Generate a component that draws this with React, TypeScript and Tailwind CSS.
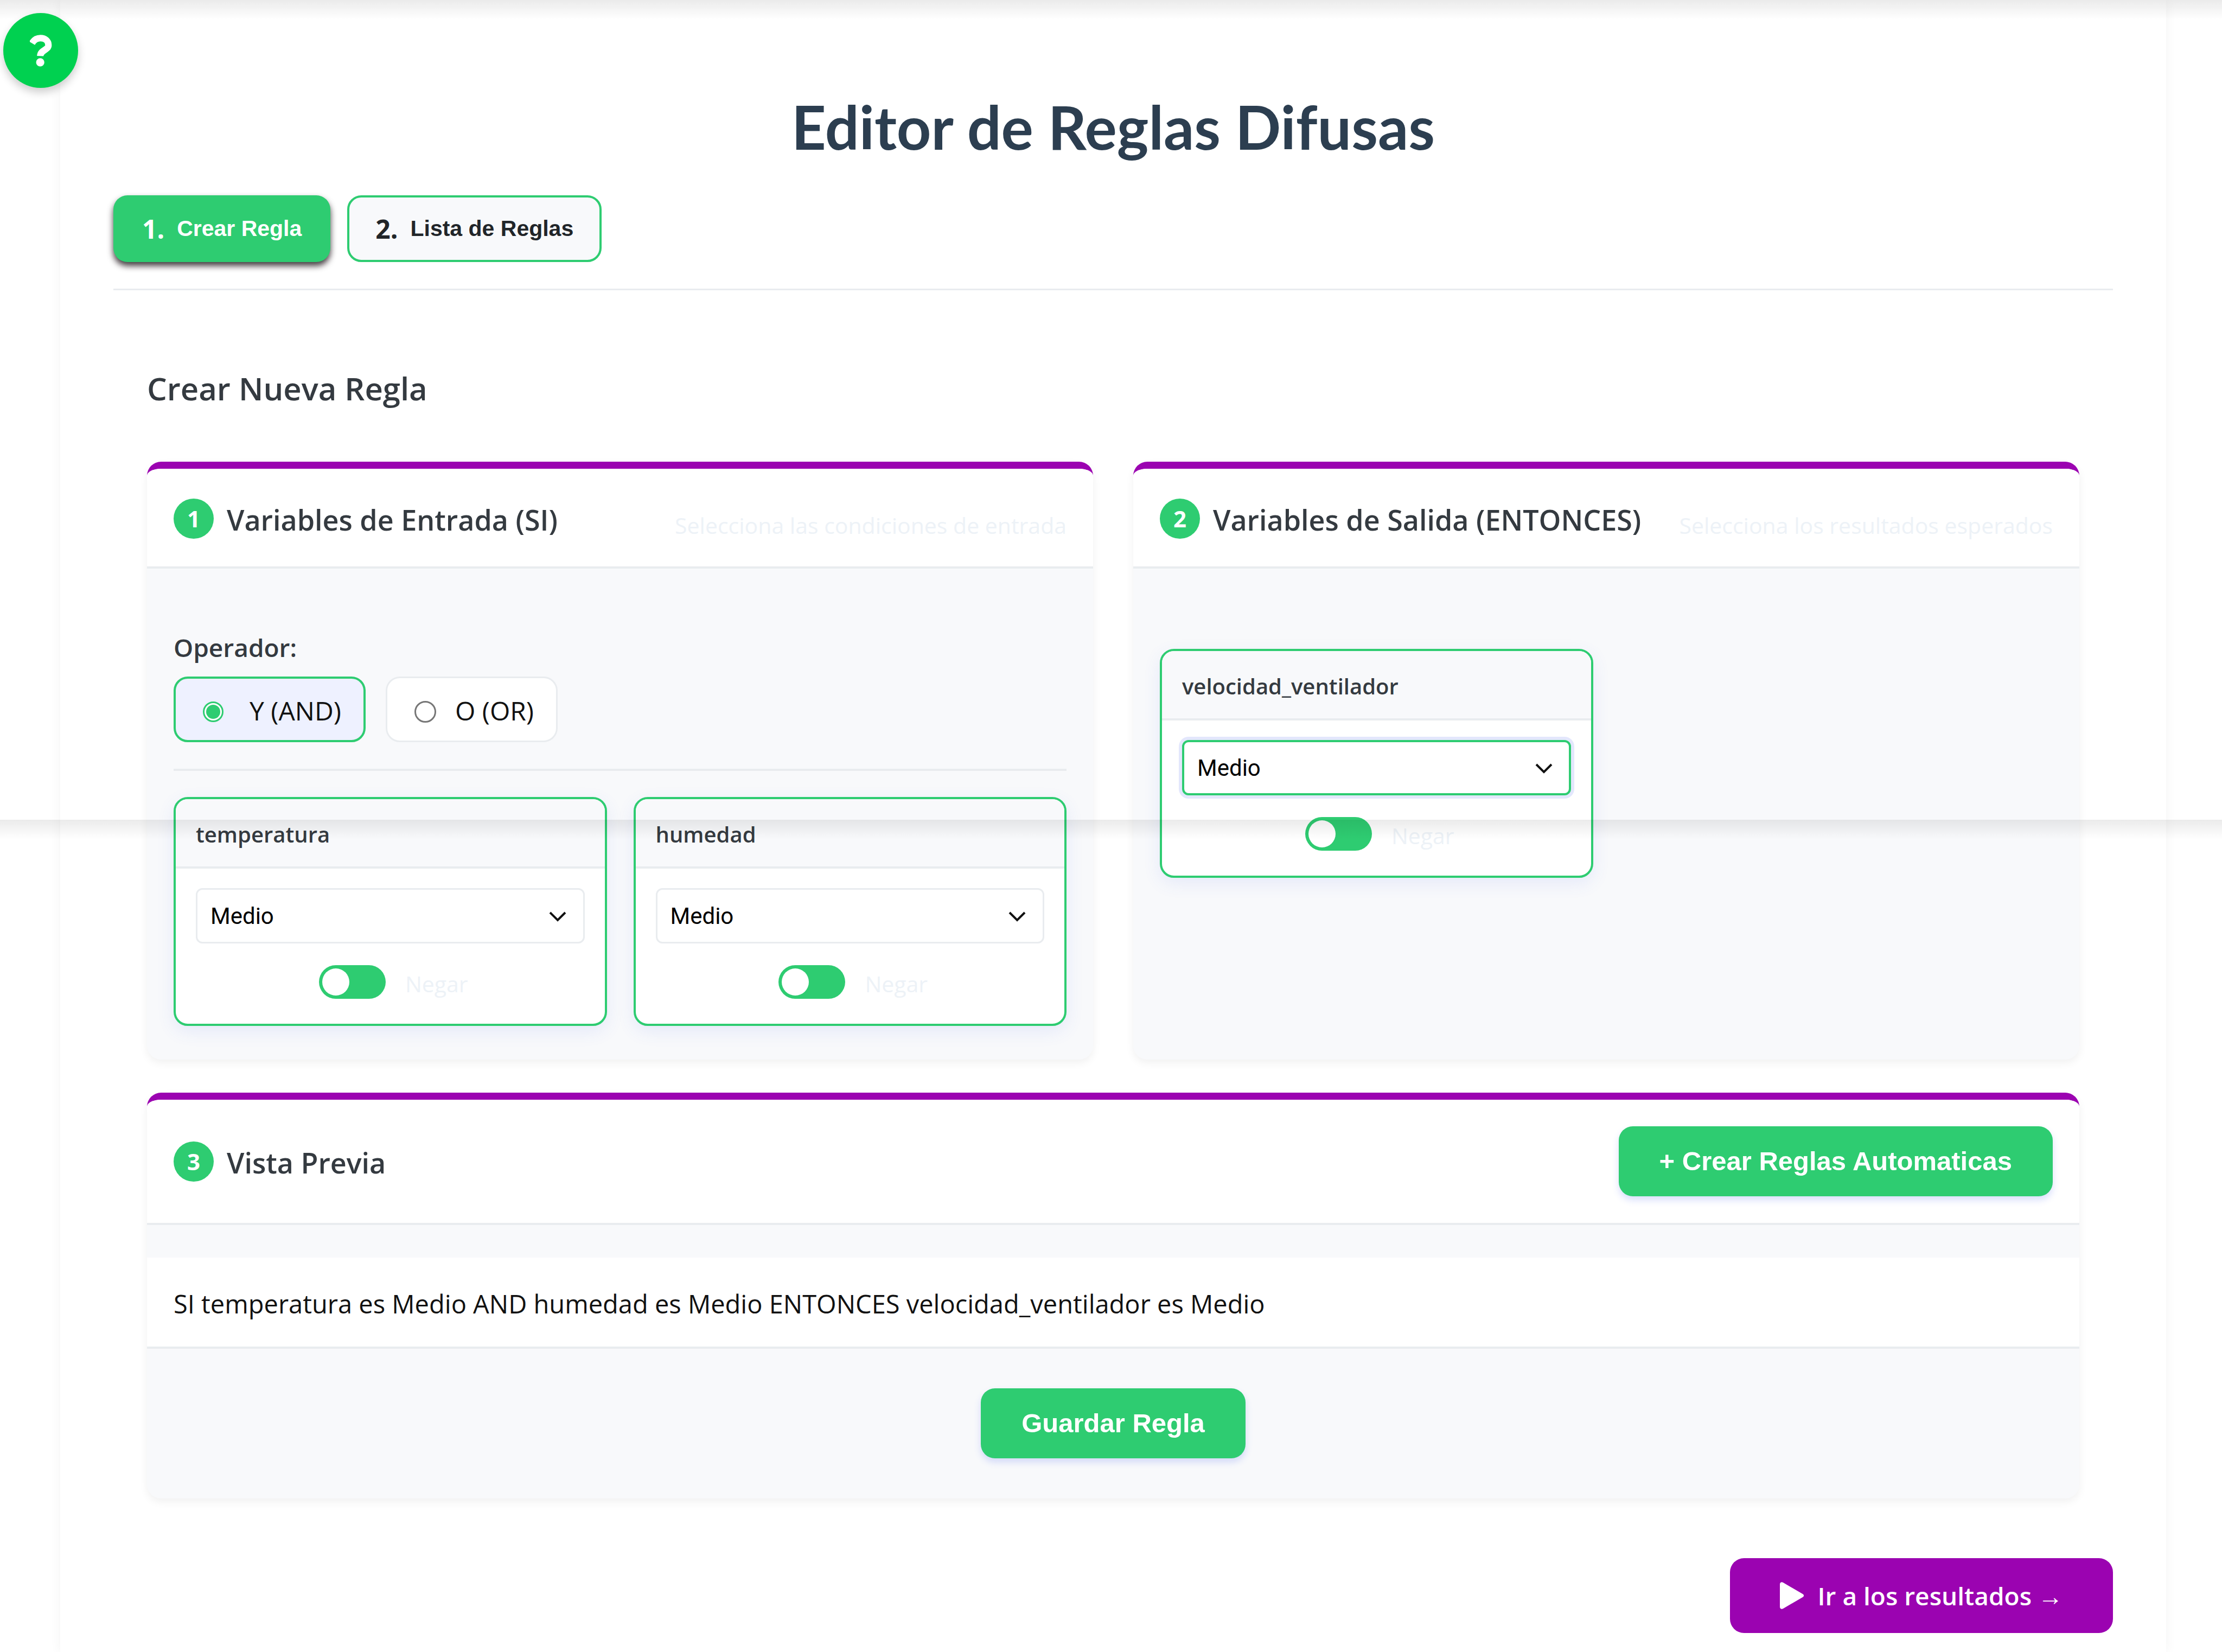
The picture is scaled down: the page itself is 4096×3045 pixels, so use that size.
import { useState, type ReactNode } from "react";

function StepBadge({ n }: { n: number }) {
  return (
    <span className="flex size-[74px] shrink-0 items-center justify-center rounded-full bg-[#2ecc71] text-[42px] font-bold leading-none text-white">
      {n}
    </span>
  );
}

function Panel({
  step,
  title,
  aside,
  headerClass,
  children,
}: {
  step: number;
  title: string;
  aside: ReactNode;
  headerClass: string;
  children: ReactNode;
}) {
  return (
    <section className="flex flex-col overflow-hidden rounded-[26px] border-t-[13px] border-[#9b03b1] bg-[#f8f9fb] shadow-[0_6px_16px_rgba(0,0,0,0.06)]">
      <header
        className={`flex items-center justify-between border-b-4 border-[#e9ecef] bg-white px-[49px] ${headerClass}`}
      >
        <div className="flex items-center gap-6">
          <StepBadge n={step} />
          <h3 className="pt-1 text-[52px] font-semibold leading-[72px] text-[#343a40]">{title}</h3>
        </div>
        {aside}
      </header>
      {children}
    </section>
  );
}

function Hint({ children }: { children: ReactNode }) {
  return <p className="pt-6 text-[41px] leading-[56px] text-[#edf2f7]">{children}</p>;
}

function Chevron() {
  return (
    <svg
      className="pointer-events-none absolute right-[33px] top-[42px] h-[22px] w-[34px]"
      viewBox="0 0 34 22"
      fill="none"
      stroke="#111"
      strokeWidth="4"
    >
      <path d="M3 3l14 14L31 3" />
    </svg>
  );
}

function VariableCard({ name, active = false }: { name: string; active?: boolean }) {
  const [value, setValue] = useState("Medio");
  const [negated, setNegated] = useState(false);
  return (
    <article className="overflow-hidden rounded-[26px] border-4 border-[#2ecc71] bg-white shadow-[0_10px_32px_rgba(67,97,238,0.10)]">
      <h4 className="border-b-4 border-[#e9ecef] bg-[#f8f9fb] px-[37px] pb-[30px] pt-[36px] text-[40px] font-semibold leading-[58px] text-[#343a40]">
        {name}
      </h4>
      <div className="flex flex-col gap-10 px-[37px] pb-[46px] pt-9">
        <div className="relative">
          <select
            aria-label={name}
            value={value}
            onChange={(e) => setValue(e.target.value)}
            className={`h-[102px] w-full appearance-none rounded-[12px] bg-white px-6 font-['Roboto',sans-serif] text-[42px] text-black outline-none ${
              active
                ? "border-4 border-[#2ecc71] shadow-[0_0_0_6px_rgba(67,97,238,0.15)]"
                : "border-[3px] border-[#e9ecef]"
            }`}
          >
            <option>Bajo</option>
            <option>Medio</option>
            <option>Alto</option>
          </select>
          <Chevron />
        </div>
        <label className="flex items-center justify-center gap-9 pl-3">
          <input
            type="checkbox"
            role="switch"
            checked={negated}
            onChange={(e) => setNegated(e.target.checked)}
            className="flex h-[62px] w-[123px] appearance-none items-center rounded-full bg-[#2ecc71] px-1.5 before:size-[50px] before:rounded-full before:bg-white checked:justify-end checked:bg-[#9b03b1]"
          />
          <span className="pt-1.5 text-[41px] leading-[56px] text-[#edf2f7]">Negar</span>
        </label>
      </div>
    </article>
  );
}

function OperatorOption({
  label,
  checked,
  onSelect,
}: {
  label: string;
  checked: boolean;
  onSelect: () => void;
}) {
  return (
    <label
      className={`flex h-[121px] items-center rounded-[26px] pl-[50px] pr-[41px] pt-1 text-[48px] text-[#111] ${
        checked
          ? "gap-[48px] border-4 border-[#2ecc71] bg-[#eef1ff]"
          : "gap-[35px] border-[3px] border-[#e9ecef] bg-white"
      }`}
    >
      <input
        type="radio"
        name="operador"
        checked={checked}
        onChange={onSelect}
        className="mt-1 flex size-[40px] appearance-none items-center justify-center rounded-full border-[3px] border-[#767676] bg-white before:size-[26px] before:rounded-full checked:size-[38px] checked:border-[#2ecc71] checked:before:bg-[#2ecc71]"
      />
      {label}
    </label>
  );
}

function HeaderShadow({ className }: { className: string }) {
  return (
    <div
      className={`pointer-events-none absolute inset-x-0 h-9 bg-gradient-to-b from-black/8 to-transparent ${className}`}
    />
  );
}

export default function App() {
  const [operator, setOperator] = useState("Y");
  return (
    <div className="relative min-h-screen bg-white font-['Segoe_UI','Open_Sans',sans-serif]">
      <HeaderShadow className="top-0" />
      <button
        type="button"
        aria-label="Ayuda"
        className="absolute left-1.5 top-6 flex size-[138px] items-center justify-center rounded-full bg-[#00d150] shadow-[0_8px_16px_rgba(0,0,0,0.2)]"
      >
        <svg className="h-[59px] w-[41px]" viewBox="0 0 92 132" fill="none">
          <path
            d="M9 35C18 20 30 14 44 14c20 0 33 12 33 29C77 64 44 62 43 88"
            stroke="#fff"
            strokeWidth="27"
            strokeLinejoin="round"
          />
          <circle cx="43" cy="114" r="17" fill="#fff" />
        </svg>
      </button>

      <main className="ml-[111px] mr-[103px] min-h-screen px-[98px] pb-[37px] shadow-[0_0_20px_rgba(0,0,0,0.05)]">
        <h1 className="pt-[158px] text-center font-['Comic_Sans_MS','Lato',sans-serif] text-[111px] font-bold leading-[150px] text-[#2c3e50]">
          Editor de Reglas Difusas
        </h1>

        <nav className="mt-[52px] flex gap-[31px] border-b-[3px] border-[#e9ecef] pb-[49px]">
          <button
            type="button"
            className="flex h-[123px] items-center gap-[23px] rounded-[26px] bg-[#2ecc71] px-[53px] font-['Liberation_Sans',sans-serif] text-[41px] font-bold text-white shadow-[0_7px_12px_rgba(20,10,15,0.8)]"
          >
            <span className="font-['Open_Sans',sans-serif] text-[48px]">1.</span>
            Crear Regla
          </button>
          <button
            type="button"
            className="flex h-[123px] items-center gap-[23px] rounded-[26px] border-4 border-[#2ecc71] bg-[#f8f9fb] px-[48px] font-['Liberation_Sans',sans-serif] text-[41px] font-bold text-[#212529]"
          >
            <span className="font-['Open_Sans',sans-serif] text-[48px]">2.</span>
            Lista de Reglas
          </button>
        </nav>

        <div className="px-[62px] pt-[141px]">
          <h2 className="text-[58px] font-semibold leading-[80px] text-[#343a40]">
            Crear Nueva Regla
          </h2>

          <div className="mt-[95px] grid grid-cols-2 gap-[74px]">
            <Panel
              step={1}
              title="Variables de Entrada (SI)"
              aside={<Hint>Selecciona las condiciones de entrada</Hint>}
              headerClass="h-[184px] pt-1"
            >
              <div className="px-[49px] pb-[62px] pt-[113px]">
                <fieldset className="border-b-4 border-[#e9ecef] pb-[49px]">
                  <legend className="text-[46px] font-semibold leading-[64px] text-[#343a40]">
                    Operador:
                  </legend>
                  <div className="mt-[22px] flex gap-[37px]">
                    <OperatorOption
                      label="Y (AND)"
                      checked={operator === "Y"}
                      onSelect={() => setOperator("Y")}
                    />
                    <OperatorOption
                      label="O (OR)"
                      checked={operator === "O"}
                      onSelect={() => setOperator("O")}
                    />
                  </div>
                </fieldset>
                <div className="mt-[48px] grid grid-cols-2 gap-[49px]">
                  <VariableCard name="temperatura" />
                  <VariableCard name="humedad" />
                </div>
              </div>
            </Panel>

            <Panel
              step={2}
              title="Variables de Salida (ENTONCES)"
              aside={<Hint>Selecciona los resultados esperados</Hint>}
              headerClass="h-[184px] pt-1"
            >
              <div className="grid grid-cols-2 gap-[49px] px-[49px] pb-[62px] pt-[148px]">
                <VariableCard name="velocidad_ventilador" active />
              </div>
            </Panel>
          </div>

          <div className="mt-[61px]">
            <Panel
              step={3}
              title="Vista Previa"
              headerClass="h-[231px]"
              aside={
                <button
                  type="button"
                  className="h-[129px] rounded-[26px] bg-[#2ecc71] px-[75px] font-['Liberation_Sans',sans-serif] text-[49px] font-bold text-white shadow-[0_7px_13px_rgba(67,97,238,0.2)]"
                >
                  + Crear Reglas Automaticas
                </button>
              }
            >
              <p className="mt-[60px] border-b-4 border-[#e9ecef] bg-white px-[49px] pb-[44px] pt-[50px] text-[47px] leading-[70px] text-[#111]">
                SI temperatura es Medio AND humedad es Medio ENTONCES velocidad_ventilador es Medio
              </p>
              <div className="flex justify-center pb-[74px] pt-[73px]">
                <button
                  type="button"
                  className="h-[129px] rounded-[26px] bg-[#2ecc71] px-[75px] font-['Liberation_Sans',sans-serif] text-[49px] font-bold text-white shadow-[0_7px_13px_rgba(67,97,238,0.2)]"
                >
                  Guardar Regla
                </button>
              </div>
            </Panel>
          </div>
        </div>

        <div className="mt-[110px] flex justify-end">
          <button
            type="button"
            className="flex h-[138px] items-center gap-[26px] rounded-[26px] bg-[#9b03b1] px-[92px] text-[46px] font-semibold text-white"
          >
            <svg className="h-[50px] w-[44px]" viewBox="0 0 44 50" fill="#fff">
              <path d="M0 4c0-3 3-5 6-3l36 21c3 2 3 4 0 6L6 49c-3 2-6 0-6-3z" />
            </svg>
            Ir a los resultados →
          </button>
        </div>
      </main>

      <HeaderShadow className="top-[1511px]" />
    </div>
  );
}
